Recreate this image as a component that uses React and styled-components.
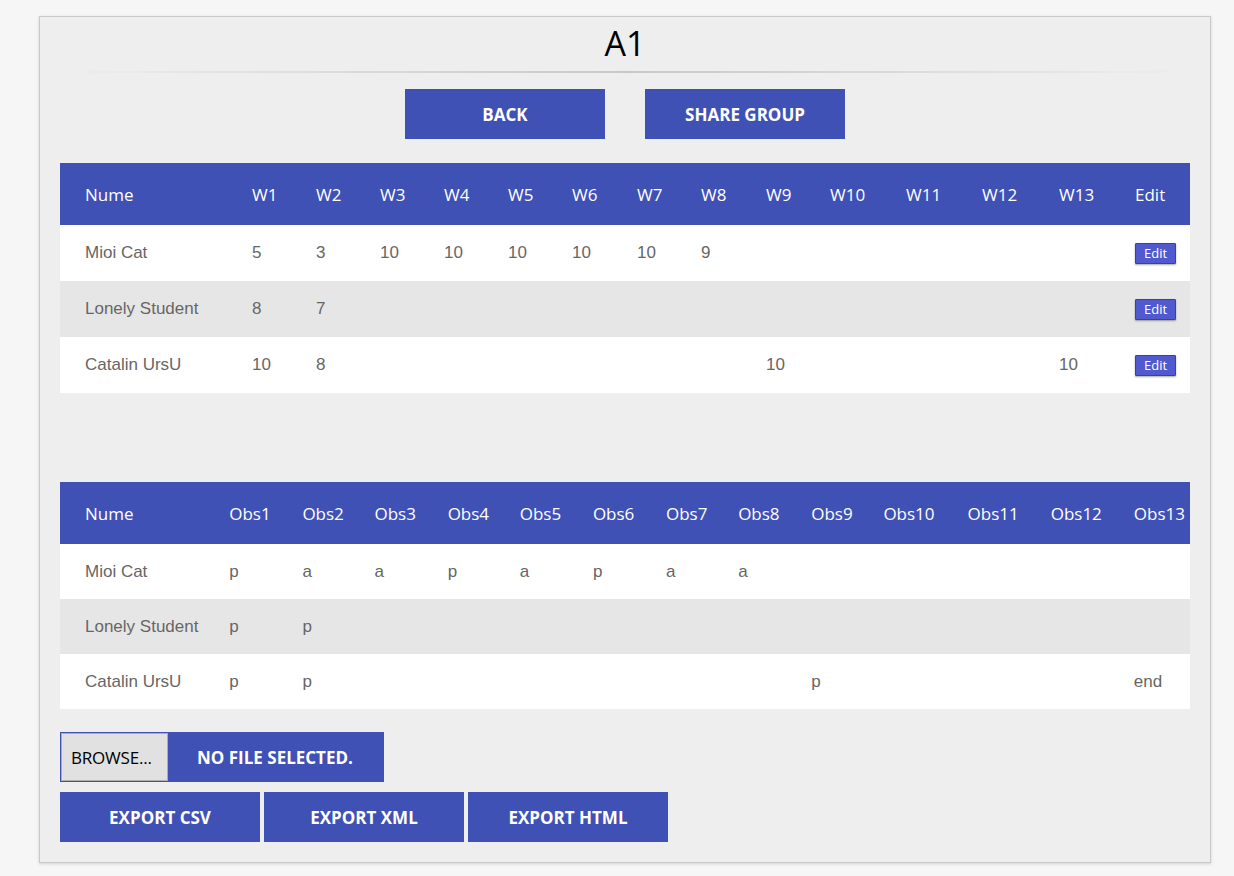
import React from "react";
import styled, { createGlobalStyle } from "styled-components";

const Global = createGlobalStyle`
  html, body { margin: 0; padding: 0; background: #f6f6f6; }
  body { font-family: "Open Sans", "Liberation Sans", sans-serif; }
  * { box-sizing: border-box; }
`;

const Page = styled.div`
  padding: 16px 0 13px 39px;
`;

const Card = styled.div`
  width: 1172px;
  background: #eeeeee;
  border: 1px solid #c9c9c9;
  box-shadow: 0 1px 3px rgba(0, 0, 0, 0.15);
  padding: 3px 20px 20px;
`;

const Title = styled.h1`
  margin: 0;
  font-family: "Open Sans", sans-serif;
  font-weight: 400;
  font-size: 34px;
  line-height: 46px;
  text-align: center;
  color: #000;
`;

const Rule = styled.hr`
  border: 0;
  height: 2px;
  margin: 5px 0 16px;
  background-image: linear-gradient(
    to right,
    rgba(0, 0, 0, 0),
    rgba(0, 0, 0, 0.16),
    rgba(0, 0, 0, 0)
  );
`;

const ButtonRow = styled.div`
  display: flex;
  justify-content: center;
  gap: 40px;
  margin-bottom: 24px;
`;

const Button = styled.button`
  width: 200px;
  height: 50px;
  border: 0;
  padding: 0;
  background: #3f51b5;
  color: #fff;
  font-family: "Open Sans", sans-serif;
  font-weight: 700;
  font-size: 17px;
  text-transform: uppercase;
  cursor: pointer;
`;

const Table = styled.table`
  width: 1130px;
  border-collapse: collapse;
  table-layout: fixed;
  margin-bottom: ${(p) => p.$mb}px;
`;

const HeadCell = styled.th`
  height: 62px;
  padding: 0 0 0 25px;
  background: #3f51b5;
  color: #fff;
  font-family: "Open Sans", sans-serif;
  font-weight: 400;
  font-size: 17px;
  text-align: left;
  white-space: nowrap;
`;

const Row = styled.tr`
  background: ${(p) => (p.$striped ? "#e6e6e6" : "#ffffff")};
  height: ${(p) => p.$h}px;
`;

const Cell = styled.td`
  padding: 0 0 0 25px;
  font-family: "Liberation Sans", Arial, sans-serif;
  font-size: 17px;
  color: #666;
  white-space: nowrap;
  vertical-align: middle;
`;

const EditButton = styled.button`
  width: 41px;
  height: 21px;
  padding: 0;
  background: #5159cf;
  border: 1px solid #3a40a0;
  border-radius: 1px;
  box-shadow: 0 1px 2px rgba(0, 0, 0, 0.35);
  color: #fff;
  font-family: "Open Sans", sans-serif;
  font-size: 13px;
  line-height: 18px;
  cursor: pointer;
  display: block;
`;

const FileBox = styled.div`
  display: flex;
  width: 324px;
  height: 50px;
  background: #3f51b5;
  border: 1px solid #3f51b5;
  margin-bottom: 10px;
`;

const BrowseButton = styled.button`
  width: 107px;
  height: 48px;
  padding: 0 0 0 9px;
  text-align: left;
  background: #e1e1e1;
  border: 1px solid #adadad;
  color: #000;
  font-family: "Open Sans", sans-serif;
  font-size: 17px;
  letter-spacing: -0.2px;
`;

const FileLabel = styled.span`
  display: flex;
  align-items: center;
  padding-left: 29px;
  color: #fff;
  font-family: "Open Sans", sans-serif;
  font-weight: 700;
  font-size: 17px;
`;

const ExportRow = styled.div`
  display: flex;
  gap: 4px;
`;

const weekCols = [167, 64, 64, 64, 64, 64, 65, 64, 65, 64, 76, 76, 77, 76];
const obsCols = [144, 73, 72, 73, 72, 73, 73, 72, 73, 72, 84, 83, 83, 81];

const weekHead = ["Nume", ...Array.from({ length: 13 }, (_, i) => `W${i + 1}`), "Edit"];
const obsHead = ["Nume", ...Array.from({ length: 13 }, (_, i) => `Obs${i + 1}`)];

const grades = [
  ["Mioi Cat", "5", "3", "10", "10", "10", "10", "10", "9", "", "", "", "", ""],
  ["Lonely Student", "8", "7", "", "", "", "", "", "", "", "", "", "", ""],
  ["Catalin UrsU", "10", "8", "", "", "", "", "", "", "10", "", "", "", "10"],
];

const obs = [
  ["Mioi Cat", "p", "a", "a", "p", "a", "p", "a", "a", "", "", "", "", ""],
  ["Lonely Student", "p", "p", "", "", "", "", "", "", "", "", "", "", ""],
  ["Catalin UrsU", "p", "p", "", "", "", "", "", "", "p", "", "", "", "end"],
];

function DataTable({ cols, head, rows, rowH, withEdit, mb }) {
  return (
    <Table $mb={mb}>
      <colgroup>
        {cols.map((w, i) => (
          <col key={i} style={{ width: w }} />
        ))}
      </colgroup>
      <thead>
        <tr>
          {head.map((h) => (
            <HeadCell key={h}>{h}</HeadCell>
          ))}
        </tr>
      </thead>
      <tbody>
        {rows.map((r, i) => (
          <Row key={i} $striped={i % 2 === 1} $h={rowH}>
            {r.map((c, j) => (
              <Cell key={j}>{c}</Cell>
            ))}
            {withEdit && (
              <Cell>
                <EditButton>Edit</EditButton>
              </Cell>
            )}
          </Row>
        ))}
      </tbody>
    </Table>
  );
}

export default function App() {
  return (
    <>
      <Global />
      <Page>
        <Card>
          <Title>A1</Title>
          <Rule />
          <ButtonRow>
            <Button>Back</Button>
            <Button>Share group</Button>
          </ButtonRow>
          <DataTable
            cols={weekCols}
            head={weekHead}
            rows={grades}
            rowH={56}
            withEdit
            mb={89}
          />
          <DataTable cols={obsCols} head={obsHead} rows={obs} rowH={55} mb={23} />
          <FileBox>
            <BrowseButton>BROWSE...</BrowseButton>
            <FileLabel>NO FILE SELECTED.</FileLabel>
          </FileBox>
          <ExportRow>
            <Button>Export CSV</Button>
            <Button>Export XML</Button>
            <Button>Export HTML</Button>
          </ExportRow>
        </Card>
      </Page>
    </>
  );
}
